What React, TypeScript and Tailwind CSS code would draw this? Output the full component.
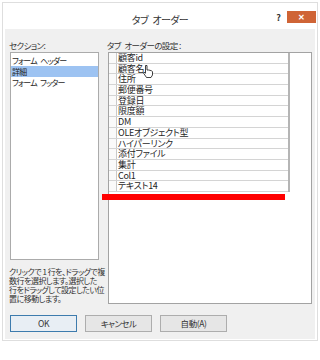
import React from 'react';

const sections = ['フォーム\u2002ヘッダー', '詳細', 'フォーム\u2002フッター'];
const fields = [
  '顧客id',
  '顧客名',
  '住所',
  '郵便番号',
  '登録日',
  '限度額',
  'DM',
  'OLEオブジェクト型',
  'ハイパーリンク',
  '添付ファイル',
  '集計',
  'Col1',
  'テキスト14',
];

const HandCursor: React.FC = () => (
  <svg width="10" height="13" viewBox="0 0 10 13" className="absolute left-[143px] top-[65px]">
    <path
      d="M2.5 0.5 L4 0.5 L4 5 L5.5 5 L7 5.3 L8.5 5.8 L9.5 6.6 L9.5 10 L8 12.5 L3.5 12.5 L0.6 8.2 L1.1 7.2 L2.5 8.2 Z"
      fill="#fff"
      stroke="#111"
      strokeWidth="0.8"
      strokeLinejoin="round"
    />
  </svg>
);

export default function App() {
  return (
    <div className="relative w-[320px] h-[360px] bg-white overflow-hidden text-[#1f1f1f] font-['Noto_Sans_CJK_JP','Noto_Sans',sans-serif] [font-feature-settings:'palt']">
      <div className="ml-[2px] mt-[2px] w-[316px] border border-[#dedede] px-[2px] pb-[1px] bg-white">
        {/* title bar */}
        <div className="grid grid-cols-[43px_1fr_43px] h-[26px]">
          <div />
          <div className="text-center pt-[10px] text-[10px] leading-[14px] tracking-[-0.6px] text-[#333]">{'タブ\u2002オーダー'}</div>
          <div className="flex justify-end items-start pt-[8px] gap-[6px] -mr-[1px]">
            <span className="text-[9px] font-bold leading-[9px] mt-[2px] text-[#333]">?</span>
            <div className="w-[29px] h-[12px] bg-[#cf6436] flex items-center justify-center text-white text-[8px] font-bold leading-none">
              ✕
            </div>
          </div>
        </div>

        {/* body */}
        <div className="bg-[#f0f0f0] h-[310px] pt-[9px] pl-[4px]">
          <div className="flex">
            <div className="w-[90px] flex flex-col">
              <div className="h-[14px] text-[8.5px] leading-[14px] tracking-[-0.6px] text-[#333]">セクション:</div>
              <div className="ml-[1px] w-[89px] h-[208px] border border-[#ababab] bg-white pt-[2px]">
                {sections.map((s, i) => (
                  <div
                    key={s}
                    className={
                      i === 1
                        ? 'h-[11px] pl-[1px] text-[8px] leading-[11px] tracking-[-0.8px] bg-[#9dc3f2] whitespace-nowrap'
                        : 'h-[11px] pl-[1px] text-[8px] leading-[11px] tracking-[-0.8px] whitespace-nowrap'
                    }
                  >
                    {s}
                  </div>
                ))}
              </div>
              <div className="mt-[7px] text-[8px] leading-[9px] tracking-[-0.5px] text-[#333] whitespace-nowrap">
                <div>クリックで 1 行を、ドラッグで複</div>
                <div>数行を選択します。選択した</div>
                <div>行をドラッグして設定したい位</div>
                <div>置に移動します。</div>
              </div>
            </div>

            <div className="ml-[8px] flex flex-col">
              <div className="h-[14px] text-[8.5px] leading-[14px] tracking-[-0.6px] text-[#333]">{'タブ\u2002オーダーの設定 :'}</div>
              <div className="ml-[1px] w-[204px] h-[252px] border border-[#a3a3a3] bg-white">
                <div className="w-[181px] border-r-2 border-[#b5b5b5]">
                  {fields.map((f) => (
                    <div key={f} className="flex h-[10.7px] border-b border-[#d4d4d4]">
                      <div className="w-[8px] border-r border-[#c9c9c9] bg-[#fafafa]" />
                      <div className="pl-[1px] text-[9px] leading-[9.7px] tracking-[-0.3px] whitespace-nowrap">{f}</div>
                    </div>
                  ))}
                </div>
              </div>
            </div>
          </div>

          <div className="flex gap-[8px] mt-[11px] pl-[1px]">
            <button className="w-[67px] h-[17px] border border-[#3d7bad] bg-[#e8eef4] text-[8.5px] leading-[15px] tracking-[-0.4px] text-[#333]">
              OK
            </button>
            <button className="w-[67px] h-[17px] border border-[#adadad] bg-[#e6e6e6] text-[8.5px] leading-[15px] tracking-[-0.6px] text-[#333]">
              キャンセル
            </button>
            <button className="w-[67px] h-[17px] border border-[#adadad] bg-[#e6e6e6] text-[8.5px] leading-[15px] tracking-[-0.4px] text-[#333]">
              自動(A)
            </button>
          </div>
        </div>
      </div>

      {/* annotation bar and cursor overlays */}
      <div className="absolute left-[102px] top-[194px] w-[183px] h-[6px] bg-[#ff0000]" />
      <HandCursor />
    </div>
  );
}
